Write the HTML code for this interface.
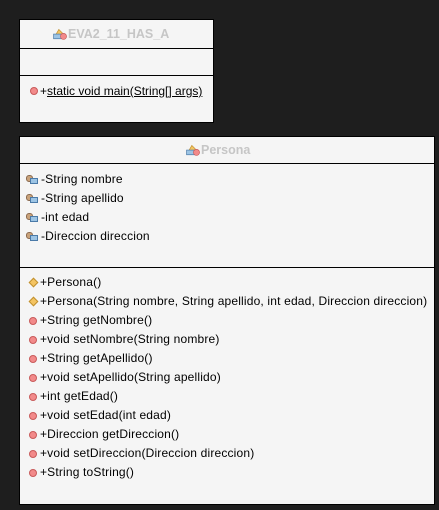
<!DOCTYPE html>
<html><head><style>
body{margin:0;width:439px;height:510px;background:#1e1e1e;position:relative;overflow:hidden;font-family:"Liberation Sans",sans-serif;font-size:12px;color:#000}
.box{position:absolute;background:#f5f5f5;border:1px solid #000;box-sizing:border-box}
.ln{position:absolute;left:0;right:0;height:1px;background:#000}
.t{position:absolute;white-space:nowrap;line-height:14px;letter-spacing:0.17px}
.title{color:#c6c6c6;font-weight:bold;font-size:12.5px;letter-spacing:0}
.ci{position:absolute;width:14px;height:13px}
.f{position:absolute;width:12px;height:10px}
.f:before{content:"";position:absolute;left:0;top:0;width:7px;height:7px;border-radius:3px;background:#c9a27a;border:1px solid #8a6a50;box-sizing:border-box}
.f:after{content:"";position:absolute;left:4px;top:3px;width:8px;height:6px;background:#9cc4e4;border:1px solid #4a7aa8;box-sizing:border-box}
.m{position:absolute;width:8px;height:8px;border-radius:50%;background:#f28a8a;border:1px solid #c85a5a;box-sizing:border-box}
.d{position:absolute;width:7px;height:7px;background:#f4c462;border:1px solid #c09030;box-sizing:border-box;transform:rotate(45deg)}
</style></head><body>
<div class="box" style="left:19px;top:19px;width:195px;height:104px">
 <div class="ln" style="top:28px"></div>
 <div class="ln" style="top:55px"></div>
 <svg class="ci" style="left:33px;top:7px" viewBox="0 0 12 11"><path d="M1 9 L5 2 L8 5 L6 9Z" fill="#f4c462" stroke="#c09030" stroke-width=".6"/><rect x="0.5" y="6" width="7" height="4" fill="#9cc4e4" stroke="#4a7aa8" stroke-width=".6"/><circle cx="9" cy="8" r="2.6" fill="#f28a8a" stroke="#c85a5a" stroke-width=".6"/></svg>
 <div class="t title" style="left:48px;top:7px">EVA2_11_HAS_A</div>
 <div class="m" style="left:10px;top:67px"></div>
 <div class="t" style="left:20px;top:64px;letter-spacing:0">+<u>static void main(String[] args)</u></div>
</div>
<div class="box" style="left:19px;top:136px;width:416px;height:369px">
 <div class="ln" style="top:26px"></div>
 <div class="ln" style="top:130px"></div>
 <svg class="ci" style="left:166px;top:6px" viewBox="0 0 12 11"><path d="M1 9 L5 2 L8 5 L6 9Z" fill="#f4c462" stroke="#c09030" stroke-width=".6"/><rect x="0.5" y="6" width="7" height="4" fill="#9cc4e4" stroke="#4a7aa8" stroke-width=".6"/><circle cx="9" cy="8" r="2.6" fill="#f28a8a" stroke="#c85a5a" stroke-width=".6"/></svg>
 <div class="t title" style="left:181px;top:6px">Persona</div>

 <div class="f" style="left:6px;top:38px"></div><div class="t" style="left:21px;top:35px">-String nombre</div>
 <div class="f" style="left:6px;top:57px"></div><div class="t" style="left:21px;top:54px">-String apellido</div>
 <div class="f" style="left:6px;top:76px"></div><div class="t" style="left:21px;top:73px">-int edad</div>
 <div class="f" style="left:6px;top:95px"></div><div class="t" style="left:21px;top:92px">-Direccion direccion</div>

 <div class="d" style="left:10px;top:142px"></div><div class="t" style="left:20px;top:138px">+Persona()</div>
 <div class="d" style="left:10px;top:161px"></div><div class="t" style="left:20px;top:157px">+Persona(String nombre, String apellido, int edad, Direccion direccion)</div>
 <div class="m" style="left:9px;top:180px"></div><div class="t" style="left:20px;top:176px">+String getNombre()</div>
 <div class="m" style="left:9px;top:199px"></div><div class="t" style="left:20px;top:195px">+void setNombre(String nombre)</div>
 <div class="m" style="left:9px;top:218px"></div><div class="t" style="left:20px;top:214px">+String getApellido()</div>
 <div class="m" style="left:9px;top:237px"></div><div class="t" style="left:20px;top:233px">+void setApellido(String apellido)</div>
 <div class="m" style="left:9px;top:256px"></div><div class="t" style="left:20px;top:252px">+int getEdad()</div>
 <div class="m" style="left:9px;top:275px"></div><div class="t" style="left:20px;top:271px">+void setEdad(int edad)</div>
 <div class="m" style="left:9px;top:294px"></div><div class="t" style="left:20px;top:290px">+Direccion getDireccion()</div>
 <div class="m" style="left:9px;top:313px"></div><div class="t" style="left:20px;top:309px">+void setDireccion(Direccion direccion)</div>
 <div class="m" style="left:9px;top:332px"></div><div class="t" style="left:20px;top:328px">+String toString()</div>
</div>
</body></html>
